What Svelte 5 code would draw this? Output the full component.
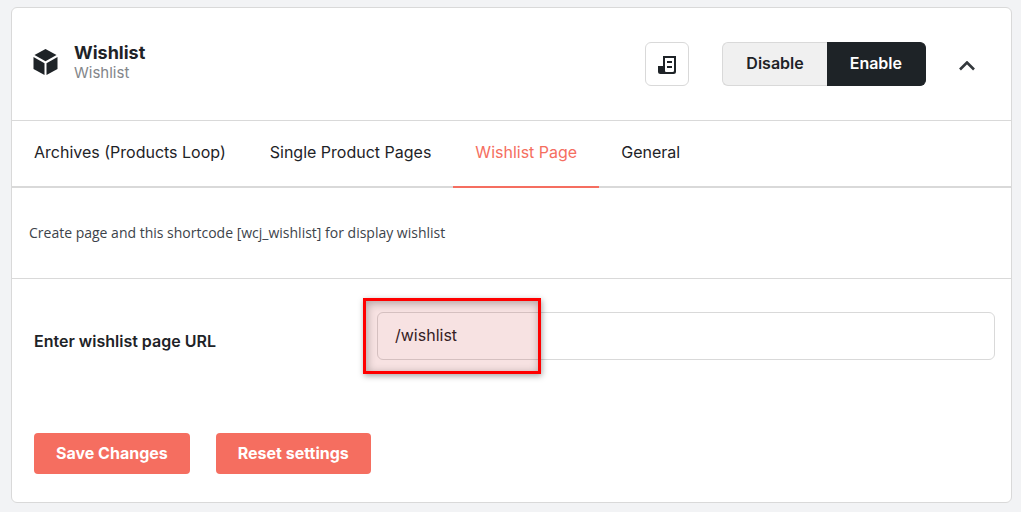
<script lang="ts">
	const tabs: string[] = [
		'Archives (Products Loop)',
		'Single Product Pages',
		'Wishlist Page',
		'General',
	]

	let active_tab: string = $state('Wishlist Page')
	let enabled: boolean = $state(true)
	let open: boolean = $state(true)
	let url: string = $state('/wishlist')

	function reset(): void {
		url = '/wishlist'
	}
</script>

<main class="card">
	<header class="header">
		<svg class="cube" viewBox="0 0 24 26" aria-hidden="true">
			<path d="M12 0 23 6 12 12.200 1 6z" />
			<path d="M0 8 11 14.200V26L0 20z" />
			<path d="M24 8 13 14.200V26L24 20z" />
		</svg>
		<div class="titles">
			<h1>Wishlist</h1>
			<p>Wishlist</p>
		</div>
		<button class="docs" aria-label="Documentation">
			<svg viewBox="0 0 18 18" aria-hidden="true">
				<path
					fill-rule="evenodd"
					d="M5 0H18V15.500Q18 18 15.500 18H2.500Q0 18 0 15.500V10H5zM7 2V14.500Q7 16 8 16H14.500Q16 16 16 14.500V2z"
				/>
				<path d="M9 5H14V7H9zM9 10H14V12H9z" />
			</svg>
		</button>
		<div class="switch">
			<button class:on={!enabled} onclick={() => (enabled = false)}>Disable</button>
			<button class:on={enabled} onclick={() => (enabled = true)}>Enable</button>
		</div>
		<button class="toggle" aria-label="Toggle settings" onclick={() => (open = !open)}>
			<svg class:closed={!open} viewBox="0 0 16 10" aria-hidden="true">
				<path d="M1 8.500 8 1.500 15 8.500" />
			</svg>
		</button>
	</header>

	{#if open}
		<nav class="tabs">
			{#each tabs as tab}
				<button class:active={tab === active_tab} onclick={() => (active_tab = tab)}>
					{tab}
				</button>
			{/each}
		</nav>

		<p class="description">Create page and this shortcode [wcj_wishlist] for display wishlist</p>

		<form onsubmit={(e) => e.preventDefault()}>
			<div class="row">
				<label for="wishlist-url">Enter wishlist page URL</label>
				<div class="field">
					<input id="wishlist-url" type="text" bind:value={url} />
					<span class="highlight"></span>
				</div>
			</div>
			<div class="actions">
				<button type="submit">Save Changes</button>
				<button type="button" onclick={reset}>Reset settings</button>
			</div>
		</form>
	{/if}
</main>

<style>
	:global(body) {
		background-color: #f2f3f5;
	}

	.card {
		--dark: #1e2327;
		--line: #d9d9d9;
		--accent: #f56e60;
		margin: 7px 9px 9px 11px;
		border: 1px solid var(--line);
		border-radius: 6px;
		background-color: #fff;
		color: var(--dark);
		font-family: Inter, sans-serif;
		font-size: 16px;
		line-height: 20px;
	}

	button,
	input {
		box-sizing: border-box;
		margin: 0;
		font: inherit;
		color: inherit;
	}

	button {
		cursor: pointer;
	}

	h1,
	p {
		margin: 0;
	}

	.header {
		display: flex;
		align-items: center;
		height: 112px;
		padding: 0 36px 0 21px;
		border-bottom: 1px solid var(--line);
	}

	.cube {
		width: 25px;
		height: 26px;
		margin-right: 16px;
		padding-bottom: 4px;
		fill: var(--dark);
	}

	.titles {
		flex: 1;
		padding-bottom: 3px;
	}

	h1 {
		font-size: 18px;
		font-weight: 700;
		line-height: 20px;
	}

	.titles p {
		color: #83868a;
		font-size: 15px;
		line-height: 20px;
	}

	.docs {
		display: flex;
		align-items: center;
		justify-content: center;
		width: 44px;
		height: 44px;
		margin-right: 33px;
		padding: 2px 0 0;
		border: 1px solid var(--line);
		border-radius: 6px;
		background: #fff;
	}

	.docs svg {
		width: 18px;
		height: 18px;
		fill: var(--dark);
	}

	.switch {
		display: flex;
	}

	.switch button {
		height: 44px;
		padding: 0 23px 2px;
		border: 1px solid var(--line);
		background-color: #f0f0f0;
		font-weight: 600;
	}

	.switch button:first-child {
		border-right: 0;
		border-radius: 6px 0 0 6px;
	}

	.switch button:last-child {
		border-left: 0;
		border-radius: 0 6px 6px 0;
	}

	.switch .on {
		border-color: var(--dark);
		background-color: var(--dark);
		color: #fff;
	}

	.toggle {
		display: flex;
		margin-left: 33px;
		padding: 4px 0 0;
		border: 0;
		background: none;
	}

	.toggle svg {
		width: 16px;
		height: 10px;
		fill: none;
		stroke: #33383c;
		stroke-width: 2.6;
	}

	.toggle .closed {
		transform: scaleY(-1);
	}

	.tabs {
		display: flex;
		box-shadow: inset 0 -2px var(--line);
	}

	.tabs button {
		height: 67px;
		padding: 0 22px 4px;
		border: 0;
		border-bottom: 2px solid transparent;
		background: none;
		font-weight: 400;
	}

	.tabs .active {
		border-color: var(--accent);
		color: var(--accent);
	}

	.description {
		padding: 35px 17px;
		border-bottom: 1px solid var(--line);
		color: #3c434a;
		font-family: 'Open Sans', sans-serif;
		font-size: 14px;
	}

	form {
		padding: 33px 16px 28px 22px;
	}

	.row {
		display: flex;
		align-items: center;
	}

	label {
		flex: 0 0 343px;
		padding-top: 10px;
		font-weight: 600;
	}

	.field {
		position: relative;
		flex: 1;
	}

	input {
		display: block;
		width: 100%;
		height: 48px;
		padding: 0 17px 2px;
		border: 1px solid var(--line);
		border-radius: 6px;
		background-color: #fff;
	}

	.highlight {
		position: absolute;
		top: -14px;
		left: -14px;
		box-sizing: border-box;
		width: 178px;
		height: 76px;
		border: 3px solid #f00;
		background-color: rgb(190 20 20 / 12%);
		box-shadow:
			1px 2px 6px rgb(0 0 0 / 35%),
			inset 1px 2px 8px rgb(0 0 0 / 30%);
		pointer-events: none;
	}

	.actions {
		display: flex;
		gap: 26px;
		margin-top: 73px;
	}

	.actions button {
		height: 41px;
		padding: 0 22px 2px;
		border: 0;
		border-radius: 4px;
		background-color: var(--accent);
		color: #fff;
		font-weight: 700;
	}
</style>
